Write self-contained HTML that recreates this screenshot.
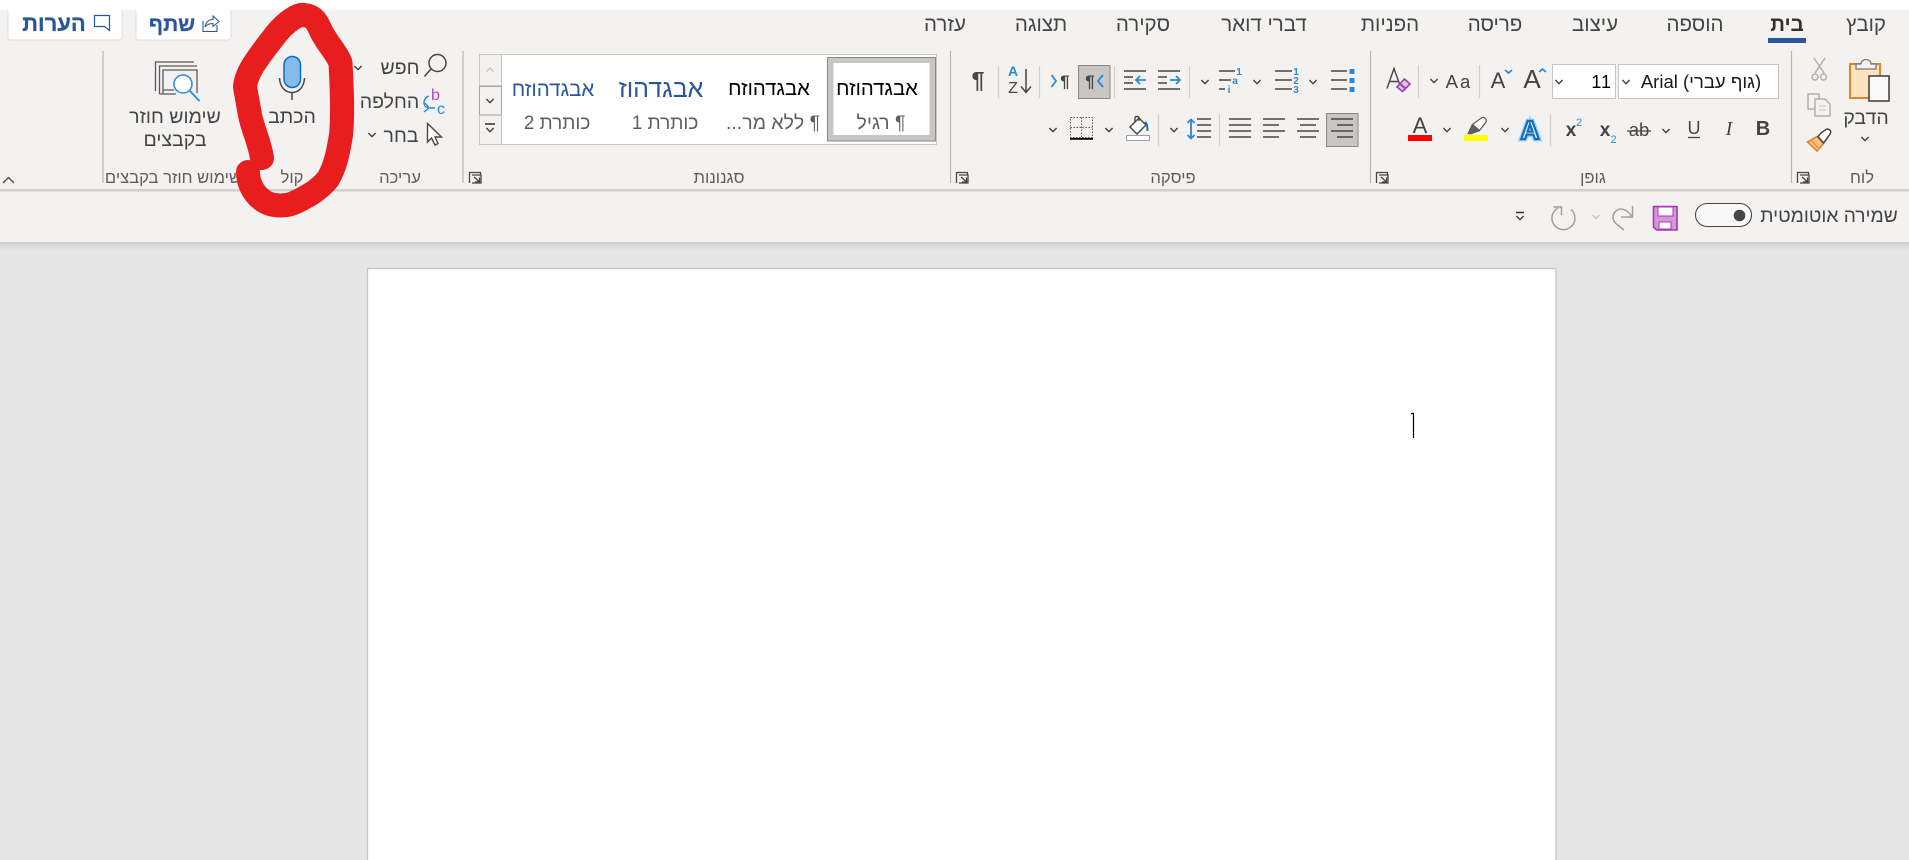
<!DOCTYPE html>
<html lang="he"><head><meta charset="utf-8"><title>Word</title>
<style>
html,body{margin:0;padding:0;background:#e6e6e6;width:1909px;height:860px;overflow:hidden}
svg{display:block;position:absolute;left:0;top:0}
text{font-family:"Liberation Sans","Noto Sans CJK JP",sans-serif;direction:rtl;text-anchor:middle;fill:#444;font-size:19.5px}
.t{font-size:20.5px;fill:#444}
.g{font-size:16.6px;fill:#605e5c}
.i{stroke:#484644;stroke-width:1.5;fill:none}
.b{stroke:#2b88d8;stroke-width:1.8;fill:none}
.n{font-size:10px;font-weight:bold;fill:#2b88d8;direction:ltr}
</style></head><body>
<svg width="1909" height="860" viewBox="0 0 1909 860" xmlns="http://www.w3.org/2000/svg">
<defs>
<linearGradient id="sh" x1="0" y1="0" x2="0" y2="1"><stop offset="0" stop-color="#cfcfcf"/><stop offset="1" stop-color="#e6e6e6"/></linearGradient>
<path id="c" d="M-3.6 -2L0 1.6L3.6 -2" fill="none" stroke="#484644" stroke-width="1.5"/>
<path id="ln" d="M0.500 11V0.500H11.500V3M3 3H12V11H3M5 5L10 9.500M10.500 5.500V10H6" fill="none" stroke="#484644" stroke-width="1.300"/>
</defs>
<!-- backgrounds -->
<rect width="1909" height="860" fill="#e6e6e6"/>
<rect width="1909" height="10" fill="#fff"/>
<rect y="10" width="1909" height="232" fill="#f3f2f1"/>
<rect y="189" width="1909" height="2.5" fill="#d2d0ce"/>
<rect y="242" width="1909" height="8" fill="url(#sh)"/>
<rect x="367.5" y="268.5" width="1188.5" height="600" fill="#fff" stroke="#c6c6c6" stroke-width="1.4"/>
<path d="M1411 413.5H1413.5V438" fill="none" stroke="#000" stroke-width="1.2"/>

<!-- top buttons -->
<rect x="8" y="4" width="114" height="36" rx="3" fill="#fff" stroke="#e1dfdd"/>
<rect x="136" y="4" width="95" height="36" rx="3" fill="#fff" stroke="#e1dfdd"/>
<rect width="240" height="10" fill="#fff"/>
<text x="54" y="31" style="font-size:22px;font-weight:bold;fill:#2b579a;stroke:#2b579a;stroke-width:.3">הערות</text>
<text x="172" y="31" style="font-size:21px;font-weight:bold;fill:#2b579a;stroke:#2b579a;stroke-width:.3">שתף</text>
<path d="M94.500 15.500H109.500V30.500L104.500 26.500H94.500Z" fill="none" stroke="#2b579a" stroke-width="1.200"/>
<path d="M203 21V31.500H217V25M205 27C206 22 209 19.500 213 19.500V16L219 21.500L213 26.500V23.500C210 23.500 207 24.500 205 27Z" fill="none" stroke="#2b579a" stroke-width="1.100"/>

<!-- tabs -->
<text class="t" x="1866" y="31">קובץ</text>
<text class="t" x="1787" y="31" style="font-weight:bold;fill:#323130">בית</text>
<text class="t" x="1695" y="31">הוספה</text>
<text class="t" x="1595" y="31">עיצוב</text>
<text class="t" x="1495" y="31">פריסה</text>
<text class="t" x="1390" y="31">הפניות</text>
<text class="t" x="1264" y="31">דברי דואר</text>
<text class="t" x="1143" y="31">סקירה</text>
<text class="t" x="1041" y="31">תצוגה</text>
<text class="t" x="945" y="31">עזרה</text>
<rect x="1768" y="38" width="38" height="5" fill="#2b579a"/>

<!-- group separators -->
<path d="M103 51V183M463 51V183M950.500 51V183M1370.500 51V183M1791.500 51V183" stroke="#b8b6b4" stroke-width="1.200"/>
<path d="M998.500 66V98M1039.500 66V98M1114.500 66V98M1189.500 66V98M1158.500 114V146M1219.500 114V146M1418.500 65V98M1479.500 65V98M1550.500 114V146" stroke="#d2d0ce" stroke-width="1.200"/>

<!-- group labels -->
<text class="g" x="1862" y="183">לוח</text>
<text class="g" x="1593" y="183">גופן</text>
<text class="g" x="1173" y="183">פיסקה</text>
<text class="g" x="719" y="183">סגנונות</text>
<text class="g" x="400" y="183">עריכה</text>
<text class="g" x="292" y="183">קול</text>
<text class="g" x="173" y="183">שימוש חוזר בקבצים</text>
<path d="M3 183L8.500 177.500L14 183" fill="none" stroke="#484644" stroke-width="1.300"/>
<use href="#ln" x="469" y="172"/><use href="#ln" x="956" y="172"/><use href="#ln" x="1376" y="172"/><use href="#ln" x="1797" y="172"/>

<!-- reuse files -->
<path d="M155.500 91V62H194M159.500 94V66H197M163 94V70H197V93" fill="none" stroke="#5a5856" stroke-width="1.300"/>
<path d="M159.500 94H176M163 90H174" fill="none" stroke="#5a5856" stroke-width="1.300"/>
<circle cx="183" cy="84" r="9" fill="#fff" stroke="#2b88d8" stroke-width="1.500"/>
<path d="M190 91L199.500 101" stroke="#2b88d8" stroke-width="1.800"/>
<text x="175" y="123">שימוש חוזר</text>
<text x="175" y="146">בקבצים</text>

<!-- dictate -->
<path d="M279.500 78C280 87 285 92.500 292 92.500C299 92.500 304 87 304.500 78M292 92.500V100" fill="none" stroke="#484644" stroke-width="1.500"/>
<rect x="284" y="56.500" width="16.500" height="31" rx="8.250" fill="#83bcea" stroke="#106ebe" stroke-width="1.500"/>
<text x="292" y="123">הכתב</text>

<!-- editing -->
<circle cx="437.500" cy="63" r="8.500" class="i"/>
<path d="M431 69L424.500 76.500" class="i"/>
<text x="400" y="74">חפש</text>
<use href="#c" x="358" y="68"/>
<text x="431" y="100" style="font-size:16px;fill:#b146c2;direction:ltr;text-anchor:start">b</text>
<text x="437" y="114" style="font-size:16px;fill:#2b88d8;direction:ltr;text-anchor:start">c</text>
<path d="M429 96C423 98 422 106 428 108M425 103L429 108L424 112M430 108H435" fill="none" stroke="#2b88d8" stroke-width="1.400"/>
<text x="389.500" y="108">החלפה</text>
<path d="M427.500 123.500V142L431.500 138L435 145L438 143.500L435 137H441.500Z" fill="#fff" stroke="#484644" stroke-width="1.400"/>
<text x="401" y="142">בחר</text>
<use href="#c" x="372" y="135"/>

<!-- styles gallery -->
<rect x="479.500" y="54.500" width="457" height="90" fill="#fff" stroke="#c8c6c4"/>
<rect x="479.500" y="54.500" width="22" height="31" fill="#f3f2f1" stroke="#c8c6c4"/>
<rect x="479.500" y="86.500" width="22" height="28.500" fill="#f3f2f1" stroke="#a8a6a4"/>
<rect x="479.500" y="115.500" width="22" height="29" fill="#f3f2f1" stroke="#c8c6c4"/>
<path d="M486.500 71.500L490 68L493.500 71.500" fill="none" stroke="#c8c6c4" stroke-width="1.500"/>
<use href="#c" x="490" y="101"/>
<path d="M485 124H495" stroke="#323130" stroke-width="1.500"/>
<use href="#c" x="490" y="130"/>
<rect x="830.500" y="60" width="102" height="78" fill="#fff" stroke="#c8c6c4" stroke-width="6"/>
<rect x="827.500" y="57.500" width="108" height="83.500" fill="none" stroke="#8a8886"/>
<text x="877" y="95" style="font-size:20.300px;fill:#000">אבגדהוזח</text>
<text x="881" y="129" style="font-size:19.500px;fill:#605e5c">¶ רגיל</text>
<text x="769" y="95" style="font-size:20.300px;fill:#000">אבגדהוזח</text>
<text x="773" y="129" style="font-size:19.500px;fill:#605e5c">¶ ללא מר...</text>
<text x="661" y="97" style="font-size:25px;fill:#2b579a">אבגדהוז</text>
<text x="665" y="129" style="font-size:19px;fill:#605e5c">כותרת 1</text>
<text x="553" y="96" style="font-size:20.500px;fill:#2b579a">אבגדהוזח</text>
<text x="557" y="129" style="font-size:19px;fill:#605e5c">כותרת 2</text>

<!-- paragraph row 1 -->
<text x="978" y="88" style="font-size:23px;font-weight:bold;fill:#484644;direction:ltr">¶</text>
<text x="1013" y="76" style="font-size:14px;fill:#2b88d8;font-weight:bold;direction:ltr">A</text>
<text x="1013" y="93" style="font-size:16px;fill:#484644;direction:ltr">Z</text>
<path d="M1026 69V92M1021 86.500L1026 92.500L1031 86.500" class="i"/>
<path d="M1051.500 75L1056 81L1051.500 87" class="b"/>
<text x="1065" y="87" style="font-size:17px;font-weight:bold;fill:#484644;direction:ltr">¶</text>
<rect x="1078.500" y="65.500" width="31.500" height="33" fill="#c8c6c4" stroke="#8a8886"/>
<text x="1090" y="87" style="font-size:17px;font-weight:bold;fill:#484644;direction:ltr">¶</text>
<path d="M1103 75L1098 81L1103 87" class="b"/>
<path d="M1124 71H1146M1124 77H1133M1124 83H1133M1124 89H1146M1158 71H1180M1158 77H1167M1158 83H1167M1158 89H1180" class="i"/>
<path d="M1146 80H1136M1140 76L1136 80L1140 84M1170 80H1180M1176 76L1180 80L1176 84" class="b"/>
<use href="#c" x="1205" y="82"/>
<path d="M1219 71H1235M1219 80H1231M1219 89H1225" class="i"/>
<text class="n" x="1239" y="75">1</text><text class="n" x="1235" y="84">a</text><text class="n" x="1229" y="93">i</text>
<use href="#c" x="1257" y="82"/>
<path d="M1275 71H1292M1275 80H1292M1275 89H1292" class="i"/>
<text class="n" x="1296" y="75">1</text><text class="n" x="1296" y="84">2</text><text class="n" x="1296" y="93">3</text>
<use href="#c" x="1313" y="82"/>
<path d="M1331 71H1347M1331 80H1347M1331 89H1347" class="i"/>
<path d="M1349.500 69h5v5h-5zM1349.500 78h5v5h-5zM1349.500 87h5v5h-5z" fill="#2b88d8"/>

<!-- paragraph row 2 -->
<use href="#c" x="1053" y="130"/>
<rect x="1070.500" y="117.500" width="22" height="20" fill="none" stroke="#605e5c" stroke-dasharray="1.500 1.500"/>
<path d="M1070.500 127.500H1092.500M1081.500 117.500V137.500" stroke="#605e5c" stroke-dasharray="1.500 1.500"/>
<path d="M1070 138.800H1093" stroke="#000" stroke-width="1.800"/>
<use href="#c" x="1109" y="130"/>
<path d="M1130 127L1139 118L1146 125L1137 134ZM1135 122V118C1135 116 1139 116 1139 118V121" fill="#fff" stroke="#484644" stroke-width="1.400"/>
<path d="M1145 122C1147 123 1147.500 127 1147.500 131" fill="none" stroke="#106ebe" stroke-width="2"/>
<rect x="1126.500" y="135.500" width="23" height="5" fill="#fff" stroke="#a19f9d"/>
<use href="#c" x="1174" y="130"/>
<path d="M1191 120V138M1187.500 123L1191 119.500L1194.500 123M1187.500 135L1191 138.500L1194.500 135" class="b"/>
<path d="M1197 119H1211M1197 125H1211M1197 131H1211M1197 137H1211" class="i"/>
<path d="M1229 119H1251M1229 125H1251M1229 131H1251M1229 137H1251" class="i"/>
<path d="M1263 119H1285M1263 125H1279M1263 131H1285M1263 137H1279" class="i"/>
<path d="M1297 119H1319M1300 125H1316M1297 131H1319M1300 137H1316" class="i"/>
<rect x="1326.500" y="113.500" width="31.500" height="33" fill="#c8c6c4" stroke="#8a8886"/>
<path d="M1331 119H1353M1337 125H1353M1331 131H1353M1337 137H1353" class="i"/>

<!-- font row 1 -->
<path d="M1387 88.500L1394 68.500L1401 88M1390 81.500H1398" fill="none" stroke="#484644" stroke-width="1.400"/>
<path d="M1397 87L1404.500 79L1410 84L1402.500 91.500Z" fill="#e3c3e8" stroke="#9b3fb0" stroke-width="1.600"/>
<path d="M1400 84L1406 89" stroke="#9b3fb0" stroke-width="2"/>
<use href="#c" x="1434" y="81"/>
<text x="1459" y="88" style="font-size:18.500px;letter-spacing:2px;direction:ltr">Aa</text>
<text x="1498" y="88" style="font-size:22px;direction:ltr">A</text>
<path d="M1505 70L1508.500 73L1512 70" class="b"/>
<text x="1532" y="88" style="font-size:26px;direction:ltr">A</text>
<path d="M1539 72L1542.500 69L1546 72" class="b"/>
<rect x="1552.500" y="64.500" width="63" height="34" fill="#fff" stroke="#c8c6c4"/>
<rect x="1618.500" y="64.500" width="160" height="34" fill="#fff" stroke="#c8c6c4"/>
<use href="#c" x="1559" y="82"/><use href="#c" x="1626" y="82"/>
<text x="1612" y="88" style="font-size:18px;fill:#000;direction:ltr;text-anchor:end;letter-spacing:1px">11</text>
<text x="1701" y="88" style="font-size:18.500px;fill:#1b1a19">(גוף עברי) Arial</text>

<!-- font row 2 -->
<text x="1420" y="133" style="font-size:22px;direction:ltr">A</text>
<rect x="1408" y="135" width="24" height="6" fill="#f00"/>
<use href="#c" x="1447" y="130"/>
<path d="M1468 133.500L1472 125L1479 131L1470.500 134Z" fill="#605e5c" stroke="#605e5c"/>
<path d="M1472.500 124.500L1482 117.500C1484 116.500 1487 119.500 1486 122L1479.500 130.500Z" fill="#fff" stroke="#605e5c" stroke-width="1.300"/>
<rect x="1464" y="135" width="24" height="6" fill="#ff0"/>
<use href="#c" x="1505" y="130"/>
<text x="1530" y="139" style="font-size:26px;font-weight:bold;fill:#9fcdf0;stroke:#9fcdf0;stroke-width:5;direction:ltr">A</text>
<text x="1530" y="139" style="font-size:26px;font-weight:bold;fill:#fff;stroke:#106ebe;stroke-width:2.200;direction:ltr">A</text>
<text x="1571" y="136" style="font-size:19px;font-weight:bold;direction:ltr">x</text>
<text x="1579" y="126" style="font-size:11px;fill:#2b88d8;direction:ltr">2</text>
<text x="1605" y="136" style="font-size:19px;font-weight:bold;direction:ltr">x</text>
<text x="1613.500" y="143" style="font-size:11px;fill:#2b88d8;direction:ltr">2</text>
<text x="1639" y="136" style="font-size:18.500px;direction:ltr">ab</text>
<path d="M1627 131H1651" stroke="#484644" stroke-width="1.300"/>
<use href="#c" x="1666" y="131"/>
<text x="1694" y="134" style="font-size:18px;direction:ltr">U</text>
<path d="M1688 137.500H1700" stroke="#484644" stroke-width="1.300"/>
<text x="1729" y="135" style="font-size:20px;font-style:italic;font-family:'Liberation Serif',serif;direction:ltr">I</text>
<text x="1763" y="135" style="font-size:20px;font-weight:bold;direction:ltr">B</text>

<!-- clipboard -->
<rect x="1850" y="64" width="30" height="34" fill="#fbe3bd" stroke="#e3842a" stroke-width="2"/>
<path d="M1856 69V64H1861C1861 58 1871 58 1871 64H1876V69Z" fill="#f3f2f1" stroke="#7a7876" stroke-width="1.300"/>
<rect x="1869" y="76" width="20" height="25" fill="#f9f9f9" stroke="#484644" stroke-width="1.600"/>
<text x="1866" y="124">הדבק</text>
<use href="#c" x="1865" y="139"/>
<path d="M1814 58L1824 73M1825 58L1815 73" stroke="#b3b0ad" stroke-width="1.500"/>
<circle cx="1815" cy="77" r="3" fill="none" stroke="#b3b0ad" stroke-width="1.500"/><circle cx="1823.500" cy="77" r="3" fill="none" stroke="#b3b0ad" stroke-width="1.500"/>
<path d="M1815 109H1808V94H1819V99" fill="none" stroke="#b3b0ad" stroke-width="1.500"/>
<path d="M1815 99H1825L1830 104V116H1815Z" fill="none" stroke="#b3b0ad" stroke-width="1.500"/>
<path d="M1819 106H1826M1819 110H1826" stroke="#c8c6c4"/>
<path d="M1807.500 142L1817 136.500L1823.500 143.500L1817 151Z" fill="#f8c282" stroke="#e3842a" stroke-width="1.600"/>
<path d="M1812 141L1818 148" stroke="#e3842a"/>
<path d="M1818 136.500L1821 133L1826 129.500C1829 128 1832 131 1830 134L1827 138.500L1823.500 143Z" fill="#fff" stroke="#484644" stroke-width="1.500"/>

<!-- QAT -->
<text x="1829" y="222" style="font-size:19.200px">שמירה אוטומטית</text>
<rect x="1695.500" y="203.500" width="56" height="23" rx="11.500" fill="#f8f8f8" stroke="#484644" stroke-width="1.100"/>
<circle cx="1739.500" cy="215.500" r="5.800" fill="#484644"/>
<path d="M1653.500 206.500H1677V230H1656.500L1653.500 227Z" fill="#d795da" stroke="#a33ab0" stroke-width="1.600"/>
<rect x="1658" y="207" width="15" height="9" fill="#fff" stroke="#a33ab0"/>
<rect x="1659" y="222" width="12" height="7" fill="#fff" stroke="#a33ab0"/>
<path d="M1632.500 206V217H1621M1632 216.500C1626 208 1619 207 1615 212C1611 217 1613 222 1619 226L1624 230" fill="none" stroke="#a19f9d" stroke-width="1.500"/>
<path d="M1592.500 215L1596 218.500L1599.500 215" fill="none" stroke="#c8c6c4" stroke-width="1.500"/>
<path d="M1571 209.500A11.500 11.500 0 1 1 1558 208M1553.500 207H1561.500V215" fill="none" stroke="#a19f9d" stroke-width="1.500"/>
<path d="M1516 212.500H1524" stroke="#323130" stroke-width="1.500"/>
<use href="#c" x="1520" y="218"/>

<!-- red scribble -->
<path d="M262 158C259 140 253 130 250 115L245 87C246 74 254 62 277 33C286 22 298 14 303 15C314 16 316 20 322 33C330 47 338 55 340.500 63C342 90 343 115 341 135C338 154 335 167 328 179C318 191 308 196 296 202C286 207 270 207 261 199C252 192 248 181 248 172" fill="none" stroke="#e81e1e" stroke-width="24" stroke-linecap="round" stroke-linejoin="round"/>
</svg>
</body></html>
